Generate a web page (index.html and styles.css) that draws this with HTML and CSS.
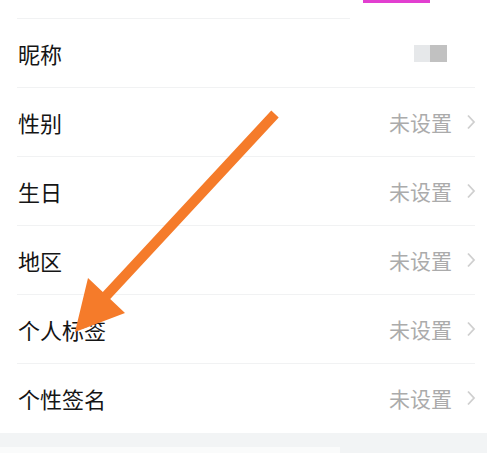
FILE: index.html
```html
<!DOCTYPE html>
<html>
<head>
<meta charset="utf-8">
<link rel="stylesheet" href="styles.css">
</head>
<body>
<div class="page">
  <div class="top">
    <div class="top-line"></div>
    <div class="pink"></div>
  </div>
  <div class="list">
    <div class="row">
      <span class="label">昵称</span>
      <span class="nick"><i class="b1"></i><i class="b2"></i></span>
    </div>
    <div class="row">
      <span class="label">性别</span>
      <span class="value">未设置</span>
      <svg class="chev" viewBox="0 0 10 16"><path d="M2 1.5 L8 8 L2 14.5" fill="none" stroke="#cfcfcf" stroke-width="1.8"/></svg>
    </div>
    <div class="row">
      <span class="label">生日</span>
      <span class="value">未设置</span>
      <svg class="chev" viewBox="0 0 10 16"><path d="M2 1.5 L8 8 L2 14.5" fill="none" stroke="#cfcfcf" stroke-width="1.8"/></svg>
    </div>
    <div class="row">
      <span class="label">地区</span>
      <span class="value">未设置</span>
      <svg class="chev" viewBox="0 0 10 16"><path d="M2 1.5 L8 8 L2 14.5" fill="none" stroke="#cfcfcf" stroke-width="1.8"/></svg>
    </div>
    <div class="row">
      <span class="label">个人标签</span>
      <span class="value">未设置</span>
      <svg class="chev" viewBox="0 0 10 16"><path d="M2 1.5 L8 8 L2 14.5" fill="none" stroke="#cfcfcf" stroke-width="1.8"/></svg>
    </div>
    <div class="row last">
      <span class="label">个性签名</span>
      <span class="value">未设置</span>
      <svg class="chev" viewBox="0 0 10 16"><path d="M2 1.5 L8 8 L2 14.5" fill="none" stroke="#cfcfcf" stroke-width="1.8"/></svg>
    </div>
  </div>
  <div class="band"><div class="band-strip"></div></div>
  <svg class="arrow" viewBox="0 0 487 453" width="487" height="453">
    <polygon points="271.3,110.6 278.7,117.4 110.2,298.9 125,313 75,332 88,278 102.8,292.1" fill="#f57b2a"/>
  </svg>
</div>
</body>
</html>
```

FILE: styles.css
```css
html, body {
  margin: 0;
  padding: 0;
  background: #ffffff;
}
.page {
  position: relative;
  width: 487px;
  height: 453px;
  overflow: hidden;
  font-family: "Noto Sans CJK SC", "Noto Sans", sans-serif;
}
.top {
  height: 19px;
  position: relative;
}
.top-line {
  position: absolute;
  left: 17px;
  width: 333px;
  bottom: 0;
  height: 1px;
  background: #f1f2f3;
}
.pink {
  position: absolute;
  left: 363px;
  top: 0;
  width: 67px;
  height: 3px;
  background: #e23fd0;
}
.list {
  display: flex;
  flex-direction: column;
}
.row {
  height: 68px;
  margin-left: 17px;
  margin-right: 12px;
  border-bottom: 1px solid #f1f2f3;
  display: flex;
  align-items: center;
  padding-left: 1px;
}
.row.last {
  border-bottom: 1px solid transparent;
}
.label {
  font-size: 22px;
  color: #151515;
  flex: 1;
  line-height: 1;
}
.value {
  font-size: 21px;
  color: #ababab;
  line-height: 1;
  margin-right: 14px;
}
.chev {
  width: 10px;
  height: 16px;
  margin-right: -1px;
}
.nick {
  display: flex;
  height: 17px;
  margin-right: 28px;
}
.nick .b1 {
  width: 16px;
  height: 17px;
  background: #e6e8ea;
}
.nick .b2 {
  width: 17px;
  height: 17px;
  background: #c1c1c1;
}
.band {
  height: 20px;
  background: #f2f4f5;
  position: relative;
}
.band-strip {
  position: absolute;
  left: 0;
  top: 14px;
  width: 340px;
  height: 6px;
  background: #fafbfb;
}
.arrow {
  position: absolute;
  left: 0;
  top: 0;
  pointer-events: none;
}
```
